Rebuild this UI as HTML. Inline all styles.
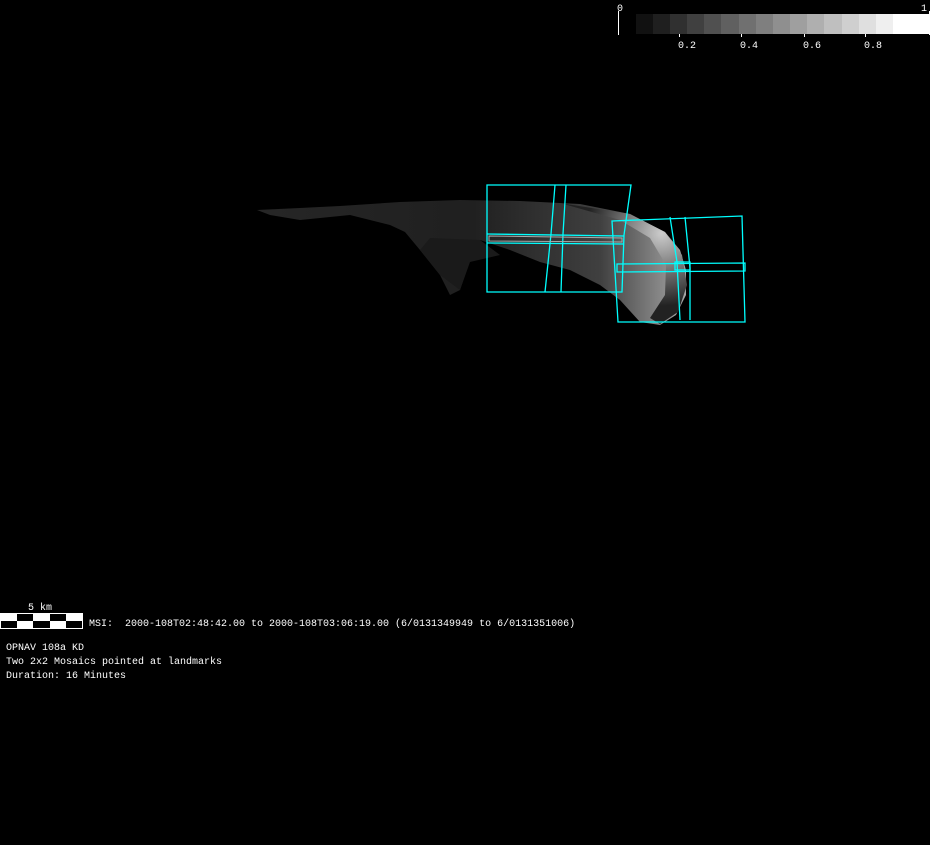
<!DOCTYPE html>
<html><head><style>
html,body{margin:0;padding:0;background:#000;width:930px;height:845px;overflow:hidden}
svg{display:block}
text{font-family:"Liberation Mono",monospace;fill:#fff;font-size:10px;white-space:pre}
</style></head><body>
<svg width="930" height="845" viewBox="0 0 930 845" xml:space="preserve">
<defs>
<linearGradient id="g" x1="0" y1="0" x2="1" y2="0">
<stop offset="0" stop-color="#333"/><stop offset="0.5" stop-color="#2a2a2a"/><stop offset="0.8" stop-color="#555"/><stop offset="1" stop-color="#ddd"/>
</linearGradient>
<radialGradient id="h" cx="0.8" cy="0.25" r="0.6">
<stop offset="0" stop-color="#ccc"/><stop offset="0.5" stop-color="#777"/><stop offset="1" stop-color="#222"/>
</radialGradient>
</defs>
<path d="M257,210 L300,208 L340,206 L400,202 L460,200 L520,201 L580,204 L630,214 L665,232 L680,250 L686,270 L686,295 L676,315 L660,325 L640,322 L620,300 L600,285 L570,270 L540,262 L510,250 L480,240 L470,260 L460,290 L450,295 L440,275 L420,250 L405,232 L390,225 L350,215 L300,220 L270,215 Z" fill="url(#g)" opacity="0.75"/>
<path d="M560,203 L630,214 L665,232 L682,255 L687,285 L678,312 L660,324 L650,318 L665,295 L666,265 L650,238 L620,220 Z" fill="url(#h)"/>
<path d="M480,240 L500,255 L470,262 L460,290 L440,275 L420,250 L430,238 Z" fill="#1a1a1a"/>
<g fill="none" stroke="#00ffff" stroke-width="1.3">
<path d="M487,185 L631,185 L624,235 L622,292 L487,292 Z"/>
<path d="M555,185 L551,234 L545,292"/>
<path d="M566,185 L563,234 L561,292"/>
<path d="M487,234 L624,236"/>
<path d="M487,243 L623,244"/>
<path d="M612,221 L742,216 L745,322 L618,322 Z"/>
<path d="M670,217 L677,262 L680,320"/>
<path d="M685,217 L690,268 L690,320"/>
<path d="M617,264 L745,263 L745,271 L617,272 Z"/>
<path d="M675,262 L690,262 L690,270 L675,270 Z"/>
</g>
<path d="M489,236 L622,238 L622,242 L489,241 Z" fill="none" stroke="#aaa" stroke-width="1"/>
<line x1="618.5" y1="11" x2="618.5" y2="35" stroke="#fff"/>
<line x1="929.5" y1="11" x2="929.5" y2="35" stroke="#fff"/>
<text x="617" y="11">0</text>
<text x="921" y="11">1</text>
<g>
<rect x="636" y="14" width="18" height="20" fill="#111"/>
<rect x="653" y="14" width="18" height="20" fill="#1f1f1f"/>
<rect x="670" y="14" width="18" height="20" fill="#303030"/>
<rect x="687" y="14" width="18" height="20" fill="#404040"/>
<rect x="704" y="14" width="18" height="20" fill="#505050"/>
<rect x="721" y="14" width="18" height="20" fill="#606060"/>
<rect x="739" y="14" width="18" height="20" fill="#707070"/>
<rect x="756" y="14" width="18" height="20" fill="#7f7f7f"/>
<rect x="773" y="14" width="18" height="20" fill="#8f8f8f"/>
<rect x="790" y="14" width="18" height="20" fill="#9f9f9f"/>
<rect x="807" y="14" width="18" height="20" fill="#afafaf"/>
<rect x="824" y="14" width="18" height="20" fill="#bfbfbf"/>
<rect x="842" y="14" width="18" height="20" fill="#cfcfcf"/>
<rect x="859" y="14" width="18" height="20" fill="#dfdfdf"/>
<rect x="876" y="14" width="18" height="20" fill="#efefef"/>
<rect x="893" y="14" width="36" height="20" fill="#fff"/>
</g>
<g stroke="#fff"><line x1="679.5" y1="34" x2="679.5" y2="37"/><line x1="741.5" y1="34" x2="741.5" y2="37"/><line x1="804.5" y1="34" x2="804.5" y2="37"/><line x1="865.5" y1="34" x2="865.5" y2="37"/></g>
<text x="678" y="48">0.2</text>
<text x="740" y="48">0.4</text>
<text x="803" y="48">0.6</text>
<text x="864" y="48">0.8</text>
<text x="28" y="610">5 km</text>
<rect x="0.5" y="613.5" width="82" height="15" fill="#000" stroke="#fff"/>
<g fill="#fff">
<rect x="0" y="613" width="17" height="8"/><rect x="33" y="613" width="17" height="8"/><rect x="66" y="613" width="17" height="8"/>
<rect x="17" y="621" width="16" height="8"/><rect x="50" y="621" width="16" height="8"/>
</g>
<text x="89" y="626">MSI:  2000-108T02:48:42.00 to 2000-108T03:06:19.00 (6/0131349949 to 6/0131351006)</text>
<text x="6" y="650">OPNAV 108a KD</text>
<text x="6" y="664">Two 2x2 Mosaics pointed at landmarks</text>
<text x="6" y="678">Duration: 16 Minutes</text>
</svg>
</body></html>
